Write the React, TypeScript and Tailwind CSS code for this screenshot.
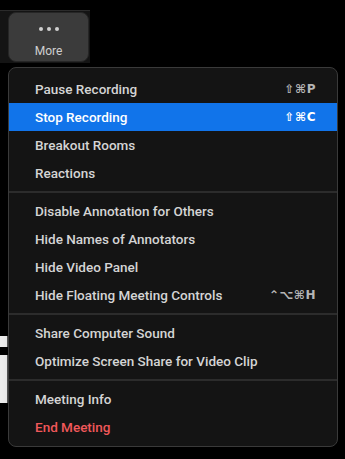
import { Fragment } from "react";

type MenuItem = {
  label: string;
  shortcut?: string;
  active?: boolean;
  danger?: boolean;
};

const sections: MenuItem[][] = [
  [
    { label: "Pause Recording", shortcut: "⇧⌘P" },
    { label: "Stop Recording", shortcut: "⇧⌘C", active: true },
    { label: "Breakout Rooms" },
    { label: "Reactions" },
  ],
  [
    { label: "Disable Annotation for Others" },
    { label: "Hide Names of Annotators" },
    { label: "Hide Video Panel" },
    { label: "Hide Floating Meeting Controls", shortcut: "⌃⌥⌘H" },
  ],
  [{ label: "Share Computer Sound" }, { label: "Optimize Screen Share for Video Clip" }],
  [{ label: "Meeting Info" }, { label: "End Meeting", danger: true }],
];

function MenuRow({ item }: { item: MenuItem }) {
  const textColor = item.active
    ? "text-white"
    : item.danger
      ? "text-[#f0585a]"
      : "text-[#d4d4d4]";

  return (
    <div
      className={`flex h-[28px] items-center justify-between pl-[26px] pr-[21px] ${
        item.active ? "bg-[#1174ea]" : ""
      }`}
    >
      <span className={`text-[13.5px] font-medium ${textColor}`}>{item.label}</span>
      {item.shortcut ? (
        <span
          className={`text-[12px] font-bold tracking-[0.5px] ${item.active ? "text-white" : "text-[#b5b5b5]"}`}
          style={{ fontFamily: '"DejaVu Sans", sans-serif' }}
        >
          {item.shortcut}
        </span>
      ) : null}
    </div>
  );
}

export default function App() {
  return (
    <div
      className="relative h-[459px] w-[345px] overflow-hidden bg-black"
      style={{ fontFamily: '"Roboto", "Liberation Sans", sans-serif' }}
    >
      <div className="mt-[10px] flex h-[53px] w-[90px] items-center border-t border-[#2b2b2b] bg-[#141414] pl-[8px]">
        <button
          type="button"
          className="flex h-[50px] w-[81px] flex-col items-center justify-start rounded-[8px] border border-[#262626] bg-[#3b3b3b] pt-[14px]"
        >
          <div className="flex gap-[4px]">
            <span className="h-[4px] w-[4px] rounded-full bg-[#d0d0d0]" />
            <span className="h-[4px] w-[4px] rounded-full bg-[#d0d0d0]" />
            <span className="h-[4px] w-[4px] rounded-full bg-[#d0d0d0]" />
          </div>
          <span className="mt-[12px] text-[12px] leading-[16px] text-[#cfcfcf]">More</span>
        </button>
      </div>

      <div className="mt-[273px] h-[11px] w-[8px] border-r border-[#555] bg-[#eeeeee]" />
      <div className="mt-[8px] h-[48px] w-[8px] border-r border-[#555] bg-[#eeeeee]" />

      <div className="absolute left-[8px] top-[67px] w-[330px] rounded-[8px] border border-[#3a3a3a] bg-[#141414] pb-[5px] pt-[7px] shadow-lg">
        {sections.map((section, i) => (
          <Fragment key={i}>
            {i > 0 ? <div className="my-[4px] h-[2px] bg-[#2c2c2c]" /> : null}
            {section.map((item) => (
              <MenuRow key={item.label} item={item} />
            ))}
          </Fragment>
        ))}
      </div>
    </div>
  );
}
